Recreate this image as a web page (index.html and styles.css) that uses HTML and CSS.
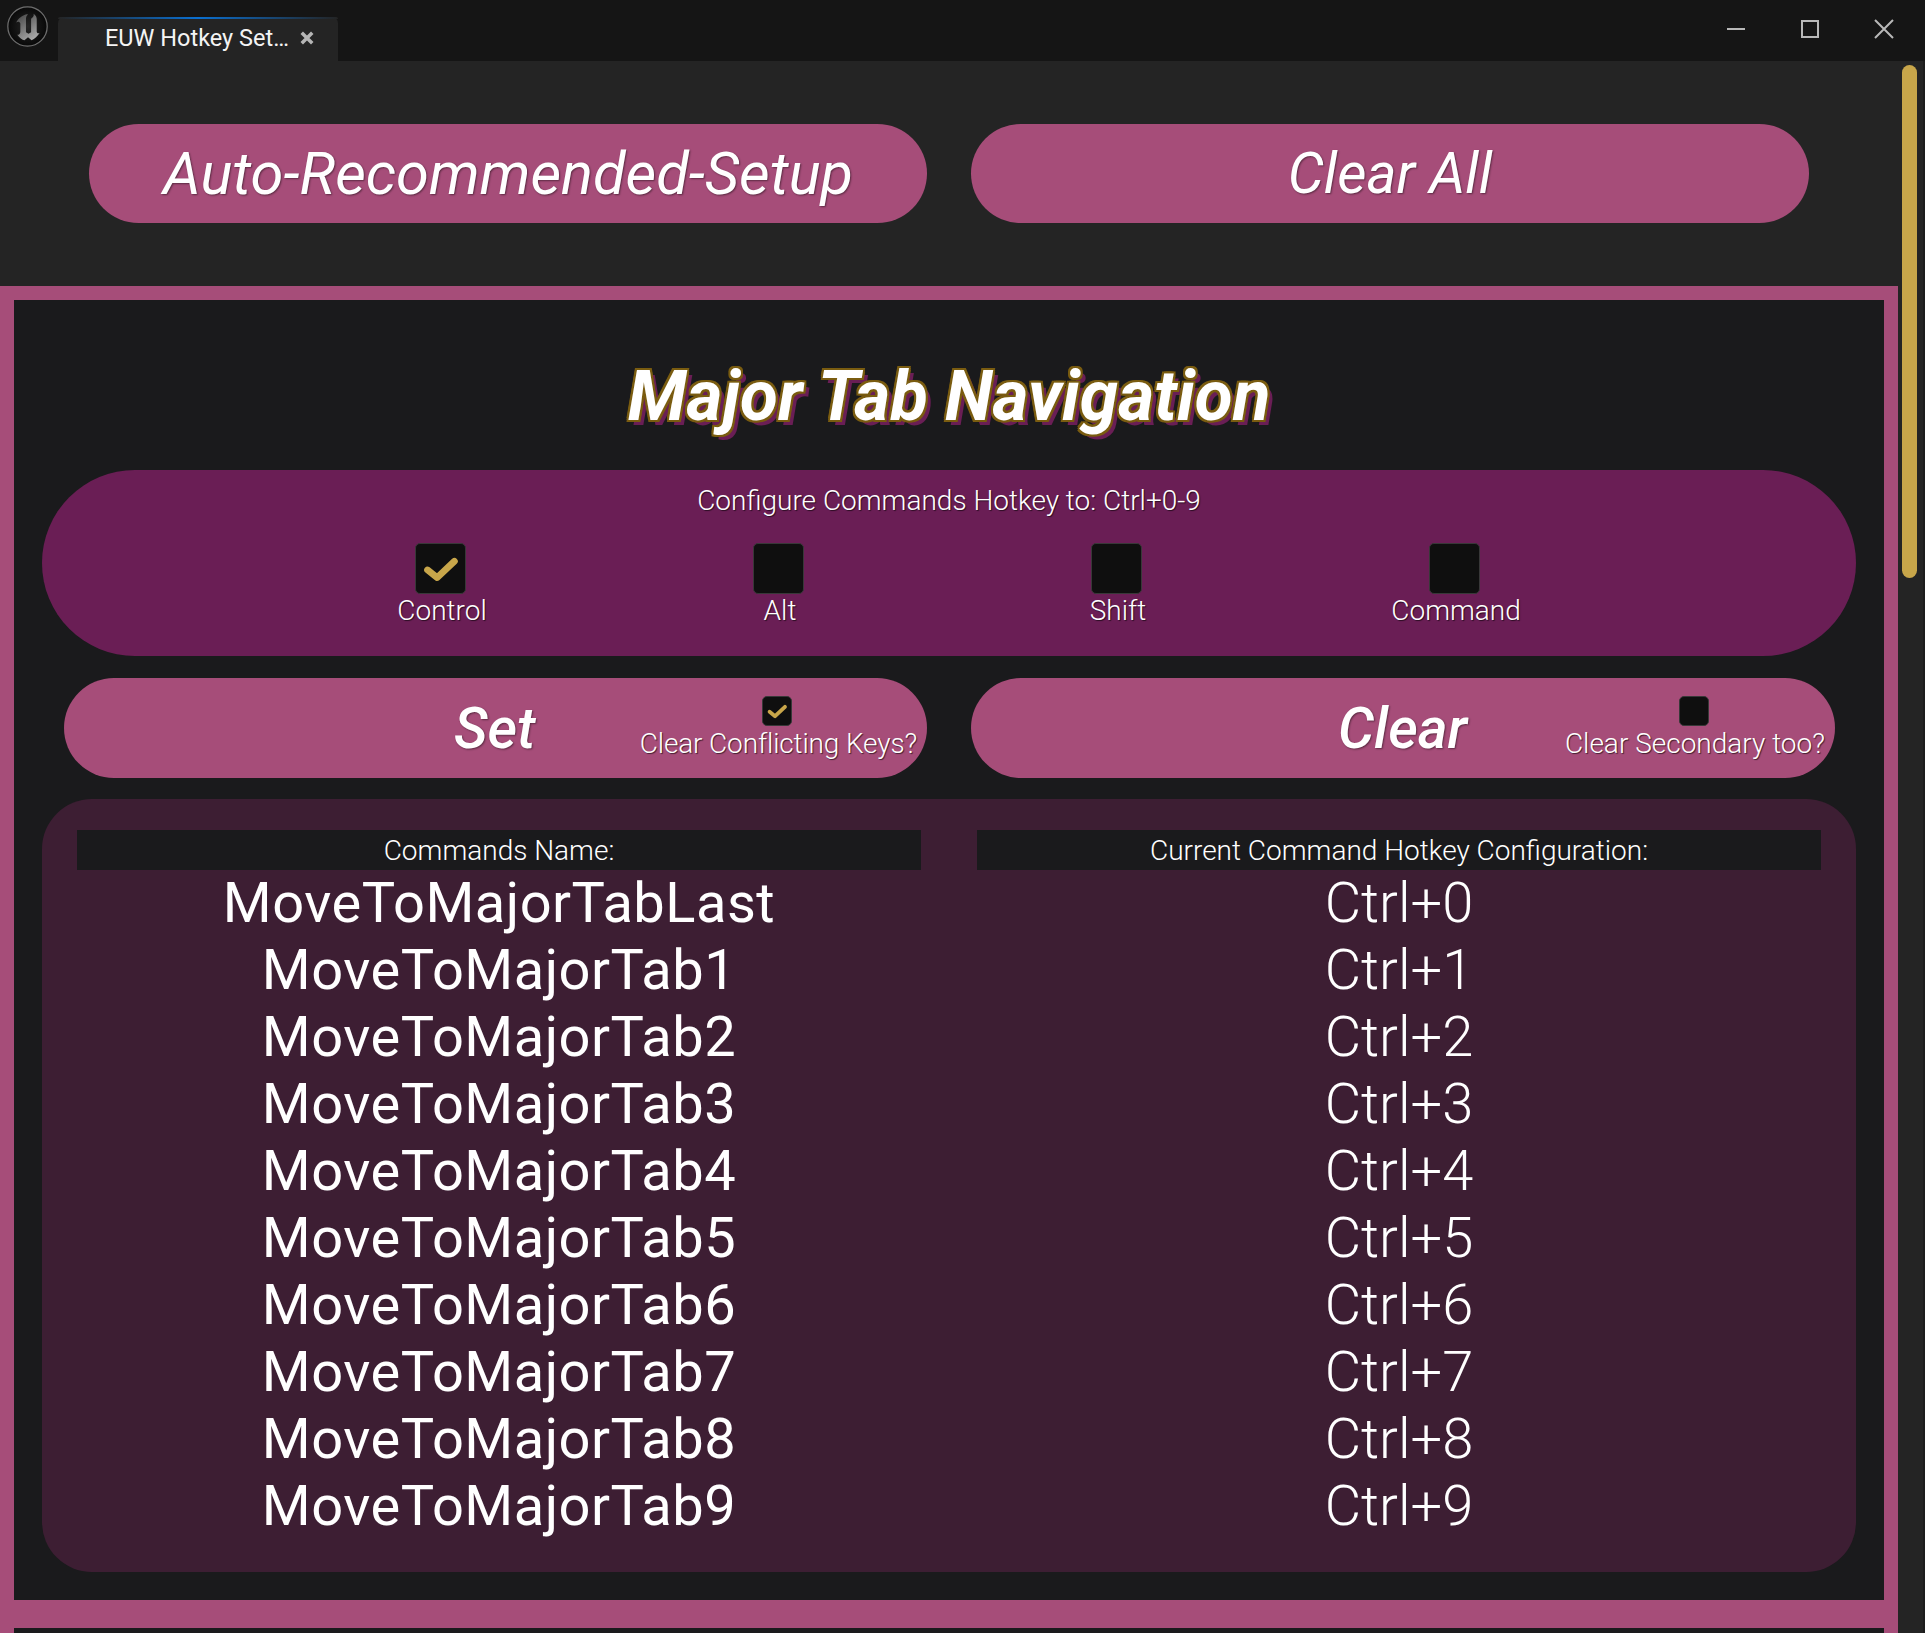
FILE: index.html
```html
<!DOCTYPE html>
<html lang="en">
<head>
    <meta charset="UTF-8">
    <title>EUW Hotkey Setup</title>
    <link rel="stylesheet" href="styles.css">
</head>
<body>

<div class="window">
    <!-- Title bar -->
    <div class="titlebar">
        <svg class="logo" viewBox="0 0 40 40">
            <defs>
                <radialGradient id="logoFill" cx="50%" cy="50%" r="55%">
                    <stop offset="0" stop-color="#262626"/>
                    <stop offset="1" stop-color="#050505"/>
                </radialGradient>
                <linearGradient id="logoMark" x1="0.2" y1="0" x2="0.8" y2="1">
                    <stop offset="0" stop-color="#4a4a4a"/>
                    <stop offset="1" stop-color="#b0b0b0"/>
                </linearGradient>
            </defs>
            <circle cx="20" cy="20" r="19.2" fill="url(#logoFill)" stroke="#6e6e6e" stroke-width="1.200"/>
            <path d="M19 8C15 9 11 12 9 16c2-1 3.500-.5 4 1v8c0 2-1 3-3 3 2 3 5 5 7 5.500l3.500-3 3.500 3c3-1.500 6-4.500 8-7.500-1.500 1-2.500.5-3-1V13c0-2-.5-3.500-3-5.500.5 2.500-1 3.500-2.500 5v13l-2.500 1.500-2.500-1.500V13c0-2 .5-3.500 2-5z" fill="url(#logoMark)"/>
        </svg>
        <div class="tab">
            <span class="tab-title">EUW Hotkey Set…</span>
            <svg class="tab-close" viewBox="0 0 12 12"><path d="M1.500 1.500l9 9M10.500 1.500l-9 9"/></svg>
        </div>
        <div class="window-buttons">
            <svg viewBox="0 0 20 20"><path d="M1 10h18"/></svg>
            <svg viewBox="0 0 20 20"><path d="M2 2h16v16H2z"/></svg>
            <svg viewBox="0 0 20 20"><path d="M1 1l18 18M19 1L1 19"/></svg>
        </div>
    </div>

    <div class="content">
        <div class="scroll-area">
            <div class="top-buttons">
                <div class="pill pill-big pill-wide">Auto-Recommended-Setup</div>
                <div class="pill pill-big">Clear All</div>
            </div>

            <div class="section">
                <h1 class="section-title">Major Tab Navigation</h1>

                <div class="config-panel">
                    <div class="config-label">Configure Commands Hotkey to: Ctrl+0-9</div>
                    <div class="modifiers">
                        <div class="modifier">
                            <div class="checkbox">
                                <svg viewBox="0 0 51 51"><path d="M12 27l10 8L40 18"/></svg>
                            </div>
                            <span>Control</span>
                        </div>
                        <div class="modifier">
                            <div class="checkbox"></div>
                            <span>Alt</span>
                        </div>
                        <div class="modifier">
                            <div class="checkbox"></div>
                            <span>Shift</span>
                        </div>
                        <div class="modifier">
                            <div class="checkbox"></div>
                            <span>Command</span>
                        </div>
                    </div>
                </div>

                <div class="action-row">
                    <div class="pill action action-set">
                        <span class="action-name">Set</span>
                        <div class="action-option">
                            <div class="checkbox checkbox-small">
                                <svg viewBox="0 0 51 51"><path d="M12 27l10 8L40 18"/></svg>
                            </div>
                            <span class="option-tight">Clear Conflicting Keys?</span>
                        </div>
                    </div>
                    <div class="pill action action-clear">
                        <span class="action-name">Clear</span>
                        <div class="action-option">
                            <div class="checkbox checkbox-small"></div>
                            <span>Clear Secondary too?</span>
                        </div>
                    </div>
                </div>

                <div class="commands-panel">
                    <div class="commands-column">
                        <div class="commands-head">Commands Name:</div>
                        <div class="command-name">MoveToMajorTabLast</div>
                        <div class="command-name">MoveToMajorTab1</div>
                        <div class="command-name">MoveToMajorTab2</div>
                        <div class="command-name">MoveToMajorTab3</div>
                        <div class="command-name">MoveToMajorTab4</div>
                        <div class="command-name">MoveToMajorTab5</div>
                        <div class="command-name">MoveToMajorTab6</div>
                        <div class="command-name">MoveToMajorTab7</div>
                        <div class="command-name">MoveToMajorTab8</div>
                        <div class="command-name">MoveToMajorTab9</div>
                    </div>
                    <div class="commands-column">
                        <div class="commands-head">Current Command Hotkey Configuration:</div>
                        <div class="command-key">Ctrl+0</div>
                        <div class="command-key">Ctrl+1</div>
                        <div class="command-key">Ctrl+2</div>
                        <div class="command-key">Ctrl+3</div>
                        <div class="command-key">Ctrl+4</div>
                        <div class="command-key">Ctrl+5</div>
                        <div class="command-key">Ctrl+6</div>
                        <div class="command-key">Ctrl+7</div>
                        <div class="command-key">Ctrl+8</div>
                        <div class="command-key">Ctrl+9</div>
                    </div>
                </div>
            </div>

            <div class="section section-next"></div>
        </div>

        <div class="scrollbar">
            <div class="scrollbar-thumb"></div>
        </div>
    </div>
</div>

</body>
</html>
```

FILE: styles.css
```css
html, body {
    margin: 0;
    height: 100%;
    overflow: hidden;
}
body {
    font-family: Roboto, "Liberation Sans", sans-serif;
    background-color: #242424;
    color: #fff;
}
.window {
    height: 1633px;
    display: flex;
    flex-direction: column;
}

/* title bar */
.titlebar {
    height: 61px;
    flex: none;
    background-color: #151515;
    display: flex;
    align-items: flex-start;
    padding-left: 7px;
    padding-right: 31px;
}
.logo {
    width: 41px;
    height: 41px;
    margin-top: 6px;
    flex: none;
}
.tab {
    width: 280px;
    height: 44px;
    margin-top: 17px;
    margin-left: 10px;
    background-color: #242424;
    border-radius: 6px 6px 0 0;
    position: relative;
    display: flex;
    align-items: center;
    padding-left: 47px;
    box-sizing: border-box;
}
.tab:before {
    content: "";
    position: absolute;
    left: 0;
    right: 0;
    top: 0;
    height: 2px;
    border-radius: 6px 6px 0 0;
    background: linear-gradient(90deg, #242424, #0a6fd0 50%, #242424);
}
.tab-title {
    font-size: 23.5px;
    line-height: 28px;
    margin-top: -3px;
    color: #f4f4f4;
}
.tab-close {
    width: 14px;
    height: 14px;
    margin-left: 11px;
    margin-top: -3px;
}
.tab-close path {
    stroke: #b5b5b5;
    stroke-width: 3;
    fill: none;
}
.window-buttons {
    margin-left: auto;
    display: flex;
    gap: 54px;
    margin-top: 19px;
}
.window-buttons svg {
    width: 20px;
    height: 20px;
}
.window-buttons path {
    stroke: #b8b8b8;
    stroke-width: 2;
    fill: none;
}

/* content */
.content {
    flex: 1;
    display: flex;
    min-height: 0;
    border-right: 2px solid #1c1c1c;
}
.scroll-area {
    width: 1898px;
    flex: none;
}
.scrollbar {
    flex: 1;
    padding: 4px 6px 0 4px;
}
.scrollbar-thumb {
    height: 513px;
    background-color: #c8a64a;
    border-radius: 8px;
}
.top-buttons {
    display: grid;
    grid-template-columns: 838px 838px;
    column-gap: 44px;
    padding: 63px 0 63px 89px;
}

.pill {
    height: 99px;
    border-radius: 50px;
    background-color: #a64d79;
    display: flex;
    align-items: center;
    justify-content: center;
}
.pill-big {
    font-size: 57px;
    font-style: italic;
    text-shadow: 1px 1px 2px rgba(0, 0, 0, 0.45);
}
.pill-wide {
    font-size: 59.6px;
}

/* section frame */
.section {
    border: 14px solid #a64d79;
    background-color: #1a1a1c;
    height: 1328px;
    box-sizing: border-box;
    padding: 0 28px;
}
.section-next {
    border-bottom: none;
    height: 19px;
}
.section-title {
    margin: 0;
    height: 170px;
    padding-top: 57px;
    box-sizing: border-box;
    text-align: center;
    font-size: 69.3px;
    line-height: 80px;
    font-style: italic;
    font-weight: 700;
    color: #fff;
    text-shadow: -2px -2px 0 #7a5c10, 2px -2px 0 #7a5c10, -2px 2px 0 #7a5c10, 2px 2px 0 #7a5c10,
        0 -2px 0 #7a5c10, 0 2px 0 #7a5c10, -2px 0 0 #7a5c10, 2px 0 0 #7a5c10, 5px 5px 0 #6a1e55;
}

/* modifier panel */
.config-panel {
    height: 186px;
    background-color: #6a1e55;
    border-radius: 93px;
    text-align: center;
    padding-top: 14px;
    box-sizing: border-box;
}
.config-label {
    font-size: 28px;
    line-height: 34px;
    font-weight: 300;
    text-shadow: 1px 1px 1px rgba(0, 0, 0, 0.6);
}
.modifiers {
    display: grid;
    grid-template-columns: repeat(4, 338px);
    justify-content: center;
    margin-top: 25px;
}
.modifier {
    display: flex;
    flex-direction: column;
    align-items: center;
    font-size: 28px;
    line-height: 34px;
    font-weight: 300;
    text-shadow: 1px 1px 1px rgba(0, 0, 0, 0.6);
}
.checkbox {
    width: 51px;
    height: 51px;
    box-sizing: border-box;
    background-color: #0f0f0f;
    border: 1px solid #383838;
    border-radius: 5px;
    display: flex;
}
.modifier .checkbox {
    margin-left: -4px;
}
.checkbox svg {
    width: 100%;
    height: 100%;
}
.checkbox path {
    stroke: #c8a64a;
    stroke-width: 7;
    stroke-linecap: round;
    stroke-linejoin: round;
    fill: none;
}
.checkbox-small {
    width: 30px;
    height: 30px;
}

/* set / clear */
.action-row {
    display: flex;
    justify-content: space-between;
    padding: 22px 21px 21px 22px;
}
.action {
    position: relative;
    justify-content: flex-start;
    box-sizing: border-box;
    height: 100px;
}
.action-set {
    width: 863px;
}
.action-clear {
    width: 864px;
}
.action-name {
    font-size: 57px;
    font-style: italic;
    font-weight: 500;
    text-shadow: 1px 1px 2px rgba(0, 0, 0, 0.45);
}
.action-set .action-name {
    margin-left: 390px;
}
.action-clear .action-name {
    margin-left: 367px;
}
.action-option {
    position: absolute;
    right: 10px;
    top: 18px;
    display: flex;
    flex-direction: column;
    align-items: center;
    font-size: 28px;
    line-height: 34px;
    font-weight: 300;
    text-shadow: 1px 1px 1px rgba(0, 0, 0, 0.6);
}
.action-option .checkbox {
    margin-bottom: 1px;
}
.action-set .checkbox {
    margin-left: -3px;
}
.action-clear .checkbox {
    margin-left: -2px;
}
.option-tight {
    letter-spacing: -0.15px;
}

/* command table */
.commands-panel {
    height: 773px;
    background-color: #3d1e33;
    border-radius: 50px;
    box-sizing: border-box;
    padding: 31px 35px;
    display: grid;
    grid-template-columns: 844px 844px;
    column-gap: 56px;
}
.commands-head {
    height: 40px;
    background-color: #1a1a1c;
    text-align: center;
    font-size: 28px;
    line-height: 42px;
    font-weight: 300;
}
.command-name, .command-key {
    height: 67px;
    font-size: 56px;
    line-height: 67px;
    text-align: center;
}
.command-name {
    letter-spacing: 0.5px;
}
.command-key {
    font-weight: 300;
}
```
